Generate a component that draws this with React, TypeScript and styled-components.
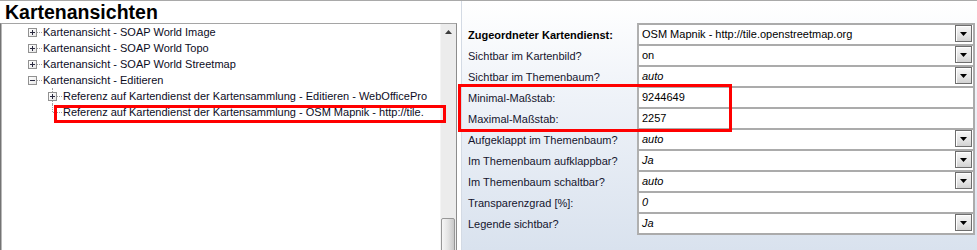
import React from 'react';
import styled, { createGlobalStyle, css } from 'styled-components';

const GlobalStyle = createGlobalStyle`
    html, body {
        margin: 0;
        padding: 0;
        background: #ffffff;
    }
    body {
        font-family: 'Liberation Sans', Arial, sans-serif;
    }
`;

const Screen = styled.div`
    position: relative;
    width: 977px;
    height: 250px;
    overflow: hidden;
    box-sizing: border-box;
    display: grid;
    grid-template-columns: 457px 516px;
    column-gap: 4px;
    border-top: 1px solid #a9a9a9;
    background: #ffffff;
`;

/* left side: title + tree */

const LeftPane = styled.div`
    display: flex;
    flex-direction: column;
    min-height: 0;
`;

const Title = styled.div`
    height: 22px;
    padding-left: 5px;
    font-size: 19.5px;
    font-weight: bold;
    line-height: 22px;
    color: #000000;
    white-space: nowrap;
`;

const TreePanel = styled.div`
    flex: 1;
    display: grid;
    grid-template-columns: 1fr 16px;
    box-sizing: border-box;
    border-top: 1px solid #a5a5a5;
    border-left: 1px solid #747474;
    border-right: 1px solid #8c8c8c;
    box-shadow: inset 1px 0 0 #b8b8b8;
    overflow: hidden;
`;

const TreeList = styled.div`
    display: flex;
    flex-direction: column;
    padding-top: 0;
`;

const Row = styled.div<{ $indent: number }>`
    display: flex;
    align-items: center;
    height: 16px;
    padding-left: ${(p) => p.$indent}px;
    font-size: 11px;
    color: #0c0c1e;
    white-space: nowrap;
`;

const Slot = styled.span<{ $trunk: 'none' | 'full' | 'elbow' }>`
    position: relative;
    display: flex;
    align-items: center;
    justify-content: center;
    width: 9px;
    height: 16px;
    flex: none;

    ${(p) =>
        p.$trunk === 'full' &&
        css`
            &::before {
                content: '';
                position: absolute;
                left: 4px;
                top: 0;
                bottom: 0;
                border-left: 1px dotted #a0a0a0;
            }
        `}

    ${(p) =>
        p.$trunk === 'elbow' &&
        css`
            &::before {
                content: '';
                position: absolute;
                left: 4px;
                top: 0;
                height: 8px;
                border-left: 1px dotted #a0a0a0;
            }
            &::after {
                content: '';
                position: absolute;
                left: 5px;
                right: 0;
                top: 8px;
                border-top: 1px dotted #a0a0a0;
            }
        `}
`;

const ExpandBox = styled.span<{ $open: boolean }>`
    position: relative;
    z-index: 1;
    box-sizing: border-box;
    width: 9px;
    height: 9px;
    border: 1px solid #919191;
    background: linear-gradient(135deg, #ffffff 0%, #e6e6e6 100%);

    &::before {
        content: '';
        position: absolute;
        left: 1px;
        top: 3px;
        width: 5px;
        height: 1px;
        background: #2a2a40;
    }

    ${(p) =>
        !p.$open &&
        css`
            &::after {
                content: '';
                position: absolute;
                left: 3px;
                top: 1px;
                width: 1px;
                height: 5px;
                background: #2a2a40;
            }
        `}
`;

const Connector = styled.span`
    width: 5px;
    height: 0;
    margin-right: 1px;
    border-top: 1px dotted #a0a0a0;
    flex: none;
`;

const Scrollbar = styled.div`
    display: flex;
    flex-direction: column;
    background: #ececec;
    box-shadow: inset 1px 0 0 #f4f4f4;
`;

const ScrollArrow = styled.div`
    height: 17px;
    display: flex;
    align-items: center;
    justify-content: center;
    padding-bottom: 1px;
    box-sizing: border-box;
`;

const ScrollThumb = styled.div<{ $offset: number }>`
    margin-top: ${(p) => p.$offset}px;
    margin-left: 1px;
    width: 14px;
    height: 60px;
    box-sizing: border-box;
    border: 1px solid #979797;
    border-radius: 2px;
    background: linear-gradient(to right, #f6f6f6 0%, #e4e4e4 50%, #c9c9c9 100%);
`;

/* right side: property grid */

const RightPane = styled.div`
    box-sizing: border-box;
    padding-top: 22px;
    padding-right: 2px;
    border-left: 1px solid #d3dae4;
    background: linear-gradient(to bottom, #ffffff 0%, #eef2f8 40%, #d9e2ee 100%);
`;

const PropGrid = styled.div`
    display: grid;
    grid-template-columns: 175px 1fr;
    grid-auto-rows: 21px;
`;

const Label = styled.div<{ $bold?: boolean }>`
    display: flex;
    align-items: center;
    padding-left: 6px;
    padding-top: 2px;
    box-sizing: border-box;
    font-size: 11px;
    font-weight: ${(p) => (p.$bold ? 'bold' : 'normal')};
    color: ${(p) => (p.$bold ? '#000000' : '#15152e')};
    white-space: nowrap;
`;

const Value = styled.div<{ $last?: boolean }>`
    display: flex;
    align-items: flex-start;
    box-sizing: border-box;
    background: #ffffff;
    border-top: 2px solid #ababab;
    border-left: 2px solid #b0b0b0;
    border-right: 2px solid #ababab;
    ${(p) =>
        p.$last &&
        css`
            border-bottom: 2px solid #ababab;
            height: 23px;
        `}
`;

const ValueText = styled.span<{ $italic?: boolean }>`
    flex: 1;
    height: 19px;
    line-height: 19px;
    padding-left: 3px;
    font-size: 11px;
    font-style: ${(p) => (p.$italic ? 'italic' : 'normal')};
    color: #000000;
    white-space: nowrap;
    overflow: hidden;
`;

const DropButton = styled.span`
    width: 17px;
    height: 17px;
    margin-right: 1px;
    flex: none;
    box-sizing: border-box;
    display: flex;
    align-items: center;
    justify-content: center;
    padding-top: 1px;
    border: 1px solid #6e6e6e;
    box-shadow: inset 1px 1px 0 #ffffff;
    background: linear-gradient(to bottom, #f7f7f7 0%, #e4e4e4 60%, #d2d2d2 100%);
`;

/* red annotation frames drawn over the screenshot */

const Highlight = styled.div<{ $x: number; $y: number; $w: number; $h: number }>`
    position: absolute;
    left: ${(p) => p.$x}px;
    top: ${(p) => p.$y}px;
    width: ${(p) => p.$w}px;
    height: ${(p) => p.$h}px;
    box-sizing: border-box;
    border: 3px solid #ff0000;
    pointer-events: none;
`;

const DownArrow = () => (
    <svg width="7" height="4" viewBox="0 0 7 4">
        <polygon points="0,0 7,0 3.5,4" fill="#000000" />
    </svg>
);

const UpArrow = () => (
    <svg width="7" height="4" viewBox="0 0 7 4">
        <polygon points="0,4 7,4 3.5,0" fill="#3c3c3c" />
    </svg>
);

interface TreeNode {
    text: string;
    indent: number;
    kind: 'plus' | 'minus' | 'leaf';
    trunk: 'none' | 'full' | 'elbow';
}

const treeNodes: TreeNode[] = [
    { text: 'Kartenansicht - SOAP World Image', indent: 27, kind: 'plus', trunk: 'none' },
    { text: 'Kartenansicht - SOAP World Topo', indent: 27, kind: 'plus', trunk: 'none' },
    { text: 'Kartenansicht - SOAP World Streetmap', indent: 27, kind: 'plus', trunk: 'none' },
    { text: 'Kartenansicht - Editieren', indent: 27, kind: 'minus', trunk: 'none' },
    {
        text: 'Referenz auf Kartendienst der Kartensammlung - Editieren - WebOfficePro',
        indent: 47,
        kind: 'plus',
        trunk: 'full',
    },
    {
        text: 'Referenz auf Kartendienst der Kartensammlung - OSM Mapnik - http://tile.',
        indent: 47,
        kind: 'leaf',
        trunk: 'elbow',
    },
];

interface Property {
    label: string;
    value: string;
    bold?: boolean;
    italic?: boolean;
    dropdown?: boolean;
}

const properties: Property[] = [
    { label: 'Zugeordneter Kartendienst:', value: 'OSM Mapnik - http://tile.openstreetmap.org', bold: true, dropdown: true },
    { label: 'Sichtbar im Kartenbild?', value: 'on', dropdown: true },
    { label: 'Sichtbar im Themenbaum?', value: 'auto', italic: true, dropdown: true },
    { label: 'Minimal-Maßstab:', value: '9244649' },
    { label: 'Maximal-Maßstab:', value: '2257' },
    { label: 'Aufgeklappt im Themenbaum?', value: 'auto', italic: true, dropdown: true },
    { label: 'Im Themenbaum aufklappbar?', value: 'Ja', italic: true, dropdown: true },
    { label: 'Im Themenbaum schaltbar?', value: 'auto', italic: true, dropdown: true },
    { label: 'Transparenzgrad [%]:', value: '0', italic: true },
    { label: 'Legende sichtbar?', value: 'Ja', italic: true, dropdown: true },
];

const App = () => {
    return (
        <>
            <GlobalStyle />
            <Screen>
                <LeftPane>
                    <Title>Kartenansichten</Title>
                    <TreePanel>
                        <TreeList>
                            {treeNodes.map((node) => (
                                <Row key={node.text} $indent={node.indent}>
                                    <Slot $trunk={node.trunk}>
                                        {node.kind !== 'leaf' && <ExpandBox $open={node.kind === 'minus'} />}
                                    </Slot>
                                    <Connector />
                                    <span>{node.text}</span>
                                </Row>
                            ))}
                        </TreeList>
                        <Scrollbar>
                            <ScrollArrow>
                                <UpArrow />
                            </ScrollArrow>
                            <ScrollThumb $offset={177} />
                        </Scrollbar>
                    </TreePanel>
                </LeftPane>

                <RightPane>
                    <PropGrid>
                        {properties.map((prop, i) => (
                            <React.Fragment key={prop.label}>
                                <Label $bold={prop.bold}>{prop.label}</Label>
                                <Value $last={i === properties.length - 1}>
                                    <ValueText $italic={prop.italic}>{prop.value}</ValueText>
                                    {prop.dropdown && (
                                        <DropButton>
                                            <DownArrow />
                                        </DropButton>
                                    )}
                                </Value>
                            </React.Fragment>
                        ))}
                    </PropGrid>
                </RightPane>

                <Highlight $x={54} $y={104} $w={392} $h={18} />
                <Highlight $x={458} $y={83} $w={274} $h={48} />
            </Screen>
        </>
    );
};

export default App;
